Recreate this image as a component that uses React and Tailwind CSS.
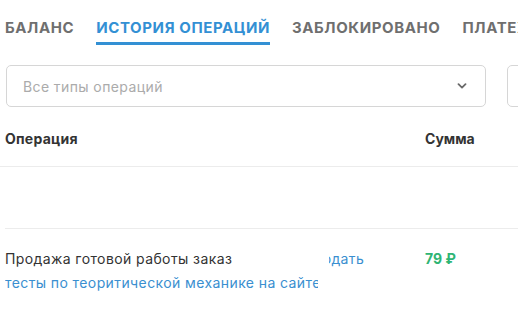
import React from "react";

const tabs = [
  { label: "БАЛАНС", active: false },
  { label: "ИСТОРИЯ ОПЕРАЦИЙ", active: true },
  { label: "ЗАБЛОКИРОВАНО", active: false },
  { label: "ПЛАТЕЖИ", active: false },
];

export default function App() {
  return (
    <div
      className="w-[518px] h-[331px] overflow-hidden bg-white"
      style={{ fontFamily: "Inter, 'Noto Sans', sans-serif" }}
    >
      {/* Tabs */}
      <div className="flex gap-[22px] pl-[5px] pt-[18px] whitespace-nowrap">
        {tabs.map((t) => (
          <div
            key={t.label}
            className={
              "pb-[4px] text-[15px] font-bold leading-[20px] tracking-[0.6px] border-b-[3px] " +
              (t.active ? "text-[#3390d4] border-[#3390d4]" : "text-[#6f6f6f] border-transparent")
            }
          >
            {t.label}
          </div>
        ))}
      </div>

      {/* Filters */}
      <div className="flex gap-[21px] pl-[6px] mt-[20px]">
        <div className="w-[480px] h-[42px] shrink-0 border border-[#d6d6d6] rounded-[5px] flex items-center justify-between pl-[16px] pr-[16px]">
          <span className="text-[14px] tracking-[0.4px] text-[#ababab]">Все типы операций</span>
          <svg width="10" height="6" viewBox="0 0 10 6" className="mr-[2px]">
            <path d="M1.5 1.2 L5 4.6 L8.5 1.2" fill="none" stroke="#6a6a6a" strokeWidth="1.8" strokeLinecap="round" strokeLinejoin="round" />
          </svg>
        </div>
        <div className="w-[60px] h-[42px] shrink-0 border border-[#d6d6d6] rounded-[5px]" />
      </div>

      {/* Table header */}
      <div className="flex pl-[5px] mt-[22px] pb-[17px] leading-[20px] border-b border-[#ececec]">
        <div className="w-[420px] text-[14px] tracking-[0.25px] font-bold text-[#333333]">Операция</div>
        <div className="text-[14px] font-bold text-[#333333]">Сумма</div>
      </div>

      {/* Empty row */}
      <div className="ml-[5px] h-[62px] border-b border-[#ececec]" />

      {/* Operation row */}
      <div className="flex pl-[5px] pt-[18px]">
        <div className="w-[420px] text-[14px] tracking-[0.4px] leading-[24px]">
          <div className="flex whitespace-nowrap">
            <span className="text-[#333333]">Продажа готовой работы заказ</span>
            <span className="w-[97px] shrink-0" />
            <span className="w-[35px] flex justify-end overflow-hidden text-[#3a8fd0]">
              <span className="shrink-0">одать</span>
            </span>
          </div>
          <div className="w-[313px] overflow-hidden whitespace-nowrap text-[#3a8fd0]">
            тесты по теоритической механике на сайте Напишем
          </div>
        </div>
        <div className="text-[14px] leading-[24px] font-bold text-[#2fb574]">79 ₽</div>
      </div>
    </div>
  );
}
